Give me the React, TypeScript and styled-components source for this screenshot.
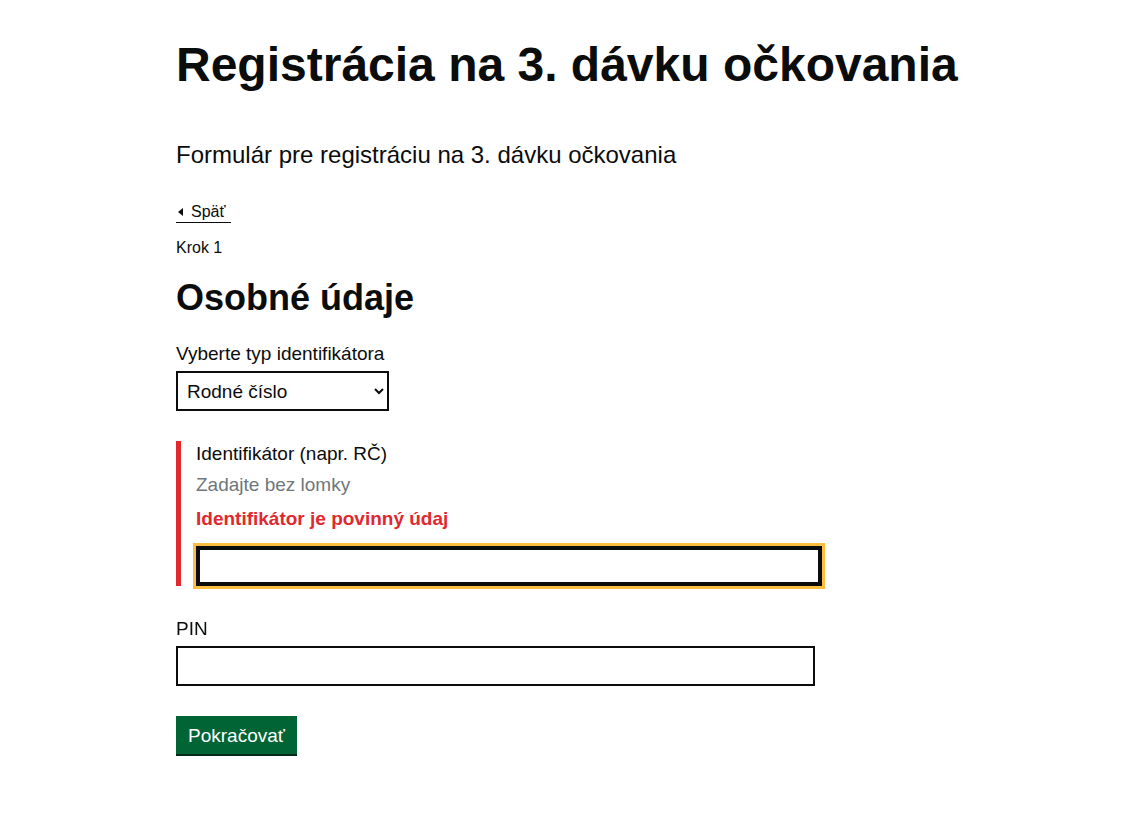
import React from "react";
import styled, { createGlobalStyle } from "styled-components";

const GlobalStyle = createGlobalStyle`
  html, body { margin: 0; padding: 0; background: #ffffff; }
  body { font-family: "Liberation Sans", Arial, sans-serif; color: #0b0c0c; }
  * { box-sizing: border-box; }
`;

const Page = styled.main`
  padding: 40px 0 60px 176px;
  display: flex;
  flex-direction: column;
  align-items: flex-start;
`;

const Title = styled.h1`
  margin: 0;
  font-size: 48px;
  line-height: 50px;
  font-weight: 700;
  color: #0b0c0c;
`;

const Lead = styled.p`
  margin: 50px 0 0;
  font-size: 24px;
  line-height: 30px;
  color: #0b0c0c;
`;

const BackLink = styled.a`
  margin-top: 31px;
  display: inline-flex;
  align-items: center;
  gap: 8px;
  padding-left: 1px;
  padding-right: 6px;
  font-size: 16px;
  line-height: 21px;
  color: #0b0c0c;
  text-decoration: none;
  border-bottom: 1px solid #0b0c0c;
`;

const Arrow = styled.span`
  display: inline-block;
  width: 0;
  height: 0;
  margin-left: 1px;
  border-top: 4px solid transparent;
  border-bottom: 4px solid transparent;
  border-right: 5px solid #0b0c0c;
`;

const Caption = styled.span`
  margin-top: 15px;
  font-size: 16px;
  line-height: 20px;
  color: #0b0c0c;
`;

const SectionTitle = styled.h2`
  margin: 20px 0 0;
  font-size: 36px;
  line-height: 40px;
  font-weight: 700;
  color: #0b0c0c;
`;

const FormGroup = styled.div<{ $error?: boolean; $gap: number }>`
  margin-top: ${(p) => p.$gap}px;
  display: flex;
  flex-direction: column;
  align-items: flex-start;
  ${(p) =>
    p.$error
      ? `border-left: 5px solid #e1282e; padding-left: 15px;`
      : ``}
`;

const Label = styled.label`
  font-size: 19px;
  line-height: 25px;
  color: #0b0c0c;
`;

const Hint = styled.div`
  margin-top: 6px;
  font-size: 19px;
  line-height: 25px;
  color: #6f777b;
`;

const ErrorMessage = styled.div`
  margin-top: 9px;
  font-size: 19px;
  line-height: 25px;
  font-weight: 700;
  color: #e1282e;
`;

const Select = styled.select`
  margin-top: 5px;
  width: 213px;
  height: 40px;
  padding: 5px 6px 5px 5px;
  border: 2px solid #0b0c0c;
  border-radius: 0;
  background: #ffffff;
  font-family: "Liberation Sans", Arial, sans-serif;
  font-size: 19px;
  color: #0b0c0c;
`;

const Input = styled.input<{ $focused?: boolean; $width: number; $gap: number }>`
  margin-top: ${(p) => p.$gap}px;
  width: ${(p) => p.$width}px;
  height: 40px;
  padding: 5px;
  border: 2px solid #0b0c0c;
  border-radius: 0;
  background: #ffffff;
  font-family: "Liberation Sans", Arial, sans-serif;
  font-size: 19px;
  color: #0b0c0c;
  caret-color: #0b0c0c;
  ${(p) =>
    p.$focused
      ? `outline: 3px solid #fdbd3f; outline-offset: 0; box-shadow: inset 0 0 0 2px #0b0c0c;`
      : `outline: none;`}
`;

const Button = styled.button`
  margin-top: 30px;
  padding: 8px 10px 7px;
  border: 2px solid transparent;
  border-radius: 0;
  background: #006435;
  box-shadow: 0 2px 0 #002818;
  color: #ffffff;
  font-family: "Liberation Sans", Arial, sans-serif;
  font-size: 19px;
  line-height: 19px;
  cursor: pointer;
`;

export default function App() {
  return (
    <>
      <GlobalStyle />
      <Page>
        <Title>Registrácia na 3. dávku očkovania</Title>
        <Lead>Formulár pre registráciu na 3. dávku očkovania</Lead>
        <BackLink href="#">
          <Arrow />
          Späť
        </BackLink>
        <Caption>Krok 1</Caption>
        <SectionTitle>Osobné údaje</SectionTitle>
        <FormGroup $gap={23}>
          <Label htmlFor="typ">Vyberte typ identifikátora</Label>
          <Select id="typ" defaultValue="rc">
            <option value="rc">Rodné číslo</option>
            <option value="bic">BIČ</option>
          </Select>
        </FormGroup>
        <FormGroup $error $gap={30}>
          <Label htmlFor="id">Identifikátor (napr. RČ)</Label>
          <Hint>Zadajte bez lomky</Hint>
          <ErrorMessage>Identifikátor je povinný údaj</ErrorMessage>
          <Input id="id" type="text" $focused $width={626} $gap={15} autoFocus />
        </FormGroup>
        <FormGroup $gap={30}>
          <Label htmlFor="pin">PIN</Label>
          <Input id="pin" type="text" $width={639} $gap={5} />
        </FormGroup>
        <Button type="button">Pokračovať</Button>
      </Page>
    </>
  );
}
